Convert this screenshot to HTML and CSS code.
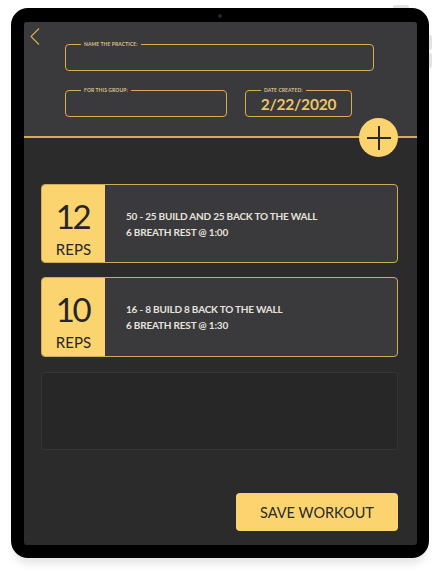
FILE: index.html
```html
<!DOCTYPE html>
<html lang="en">
<head>
<meta charset="utf-8">
<title>New Practice</title>
<link rel="stylesheet" href="styles.css">
</head>
<body>
<div class="device">
  <span class="camera"></span>
  <span class="btn-power"></span>
  <span class="btn-vol btn-vol-up"></span>
  <span class="btn-vol btn-vol-down"></span>
  <div class="screen">
    <header class="header">
      <button class="back" aria-label="Back">
        <svg width="10" height="17" viewBox="0 0 10 17"><path d="M9 0.5 L1 8.5 L9 16.5" fill="none" stroke="#d4ae55" stroke-width="1.1"/></svg>
      </button>
      <div class="fields">
        <div class="field field-name"><span class="field-label">NAME THE PRACTICE:</span></div>
        <div class="field-row">
          <div class="field field-group"><span class="field-label">FOR THIS GROUP:</span></div>
          <div class="field field-date"><span class="field-label">DATE CREATED:</span><span class="date-value">2/22/2020</span></div>
        </div>
      </div>
      <button class="add" aria-label="Add set">
        <svg width="26" height="26" viewBox="0 0 26 26"><path d="M13 1 V25 M1 13 H25" stroke="#2a2a2a" stroke-width="2"/></svg>
      </button>
    </header>
    <main class="body">
      <div class="sets">
        <div class="set">
          <div class="reps"><span class="reps-num">12</span><span class="reps-label">REPS</span></div>
          <div class="set-text"><p>50 - 25 BUILD AND 25 BACK TO THE WALL</p><p>6 BREATH REST @ 1:00</p></div>
        </div>
        <div class="set set-b">
          <div class="reps"><span class="reps-num">10</span><span class="reps-label">REPS</span></div>
          <div class="set-text"><p>16 - 8 BUILD 8 BACK TO THE WALL</p><p>6 BREATH REST @ 1:30</p></div>
        </div>
        <div class="set-empty"></div>
      </div>
      <div class="actions">
        <button class="save">SAVE WORKOUT</button>
      </div>
    </main>
  </div>
</div>
</body>
</html>
```
FILE: styles.css
```css
* { box-sizing: border-box; }
html, body { margin: 0; padding: 0; background: #fff; }
body { font-family: "Lato", "Open Sans", sans-serif; width: 441px; height: 573px; overflow: hidden; }

.device {
  position: relative;
  margin: 8px 0 0 11px;
  width: 418px;
  height: 550px;
  background: #000;
  border-radius: 17px;
  padding: 14px 12px 13px 13px;
  box-shadow: 0 9px 10px -4px rgba(0,0,0,0.12);
}
.camera {
  position: absolute; left: 207px; top: 6px;
  width: 4px; height: 4px; border-radius: 50%;
  background: #1d2734;
}
.btn-power {
  position: absolute; right: 20px; top: -3px;
  width: 16px; height: 3px; border-radius: 2px 2px 0 0;
  background: #e3e3e3;
}
.btn-vol {
  position: absolute; right: -3px;
  width: 3px; height: 15px; border-radius: 0 2px 2px 0;
  background: #e3e3e3;
}
.btn-vol-up { top: 27px; }
.btn-vol-down { top: 45px; }

.screen {
  width: 393px;
  height: 523px;
  display: flex;
  flex-direction: column;
  border-radius: 3px;
  overflow: hidden;
  background: #2b2b2b;
}

.header {
  position: relative;
  flex: 0 0 116px;
  background: #3a393b;
  border-bottom: 2px solid #d4ae55;
  display: grid;
  grid-template-columns: 41px 309px;
  padding-top: 6px;
}
.back {
  align-self: start;
  margin-left: 6px;
  width: 10px; height: 17px;
  padding: 0; border: 0; background: none;
  display: block;
}
.back svg { display: block; }

.fields {
  margin-top: 16px;
  display: flex;
  flex-direction: column;
  gap: 19px;
}
.field {
  position: relative;
  height: 27px;
  border: 1.5px solid #d4ae55;
  border-radius: 4px;
}
.field-row { display: flex; gap: 18px; }
.field-group { width: 162px; }
.field-date { width: 107px; display: flex; align-items: center; justify-content: center; }
.field-label {
  position: absolute;
  top: -4px; left: 15px;
  padding: 0 3px;
  background: #3a393b;
  color: #d9c28c;
  font-size: 5px;
  line-height: 6px;
  font-weight: 700;
  letter-spacing: 0.1px;
  white-space: nowrap;
}
.date-value {
  color: #e9c56a;
  font-size: 15.5px;
  font-weight: 700;
  letter-spacing: -0.2px;
  line-height: 1;
  margin-top: 3px;
}

.add {
  position: absolute;
  right: 19px; bottom: -21px;
  width: 39px; height: 39px;
  border-radius: 50%;
  border: 0; padding: 0;
  background: #fcd46f;
  display: flex; align-items: center; justify-content: center;
  z-index: 2;
}
.add svg { display: block; }

.body {
  flex: 1;
  display: flex;
  flex-direction: column;
  justify-content: space-between;
  padding: 46px 19px 14px 17px;
}
.sets { display: flex; flex-direction: column; gap: 14px; }
.set {
  display: flex;
  height: 79px;
  border: 1.5px solid #cfac5c;
  border-radius: 4px;
  background: #3a393c;
  overflow: hidden;
}
.set-b { height: 80px; margin-bottom: 1px; }
.reps {
  flex: 0 0 63px;
  background: #fcd46f;
  display: flex;
  flex-direction: column;
  align-items: center;
  color: #262626;
}
.reps-num {
  font-size: 33px;
  line-height: 1;
  margin-top: 15px;
  letter-spacing: -2.5px;
  margin-left: -2px;
}
.reps-label {
  font-size: 15px;
  line-height: 1;
  margin-top: 9px;
  letter-spacing: 0.1px;
}
.set-text {
  align-self: center;
  padding-left: 21px;
  color: #e6e3dd;
  font-size: 10px;
  font-weight: 700;
  letter-spacing: -0.2px;
}
.set-text p { margin: 0; line-height: 16px; }

.set-empty {
  height: 78px;
  border: 1px solid #353535;
  border-radius: 4px;
  background: #272727;
}

.actions { display: flex; justify-content: flex-end; }
.save {
  width: 162px;
  height: 38px;
  border: 0;
  border-radius: 4px;
  background: #fcd46f;
  color: #2a2a2a;
  font-family: "Lato", "Open Sans", sans-serif;
  font-size: 14.5px;
  letter-spacing: 0;
  padding: 0;
}
```
